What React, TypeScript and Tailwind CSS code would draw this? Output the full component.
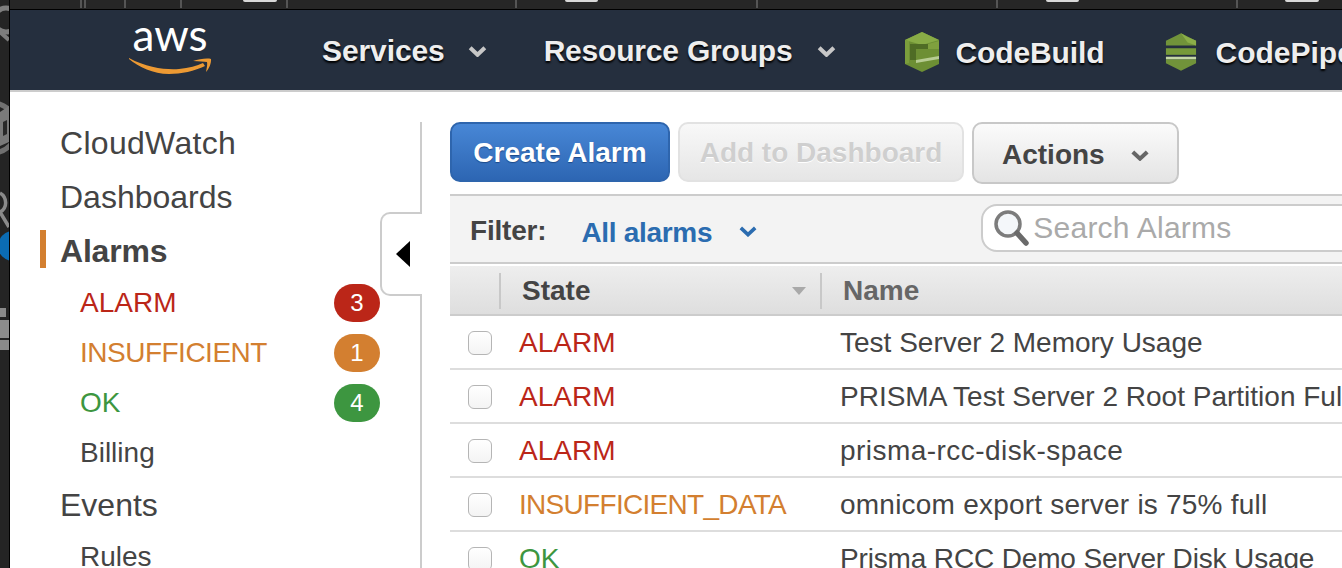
import React from "react";

const font = "font-['Liberation_Sans',Arial,sans-serif]";

function HeadChevron({ className }: { className: string }) {
  return (
    <svg viewBox="0 0 20 12" className={`${className} shrink-0`} fill="none" stroke="currentColor" strokeWidth="4.5">
      <path d="M2 2 L10 9.5 L18 2" />
    </svg>
  );
}

function CodeBuildIcon() {
  return (
    <svg viewBox="0 0 36 40" className="w-[36px] h-[40px] blur-[0.6px]">
      <polygon points="18,0 35,8 35,32 18,40 1,32 1,8" fill="#6d8f34" />
      <polygon points="18,0 35,8 18,13 1,8" fill="#88ac46" />
      <polygon points="6,12 24,12 24,17 12,17 12,28 6,28" fill="#4f6c25" />
      <polygon points="24,12 35,9 35,17 24,17" fill="#7fa03e" />
      <polygon points="12,28 35,24 35,27 12,31" fill="#b7cc92" />
      <polygon points="1,8 5,9 5,31 1,32" fill="#7b9e3c" />
    </svg>
  );
}

function CodePipelineIcon() {
  return (
    <svg viewBox="0 0 34 40" className="w-[32px] h-[40px] blur-[0.6px]">
      <polygon points="17,0 33,8 33,13 1,13 1,8" fill="#71933a" />
      <polygon points="17,0 24,4 33,8 33,13 24,10" fill="#8bae48" />
      <polygon points="1,16 33,16 33,23 1,23" fill="#76993a" />
      <polygon points="1,25 33,25 33,28 1,28" fill="#c4d6a6" />
      <polygon points="1,28 33,28 33,32 17,40 1,32" fill="#71933a" />
    </svg>
  );
}

function LeftStrip() {
  return (
    <div className="relative w-[10px] shrink-0 h-full bg-[#242424] border-r border-black overflow-hidden">
      <svg viewBox="0 0 9 568" className="absolute inset-0 w-[9px] h-[568px]">
        <circle cx="6" cy="20" r="12" fill="none" stroke="#7d7d7d" strokeWidth="5" />
        <path d="M0 32 L9 40" stroke="#7d7d7d" strokeWidth="4" />
        <circle cx="-8" cy="128" r="25" fill="none" stroke="#707070" strokeWidth="5" />
        <path d="M0 112 L9 106 V142 L0 146 Z" fill="#7a7a7a" />
        <path d="M3 122 L7 120 V134 L3 136 Z" fill="#2a2a2a" />
        <path d="M0 193 C7 197 8 208 0 212 L9 227" fill="none" stroke="#8a8a8a" strokeWidth="3.5" />
        <circle cx="13" cy="246" r="15" fill="#0b6cb4" />
        <rect x="0" y="308" width="6" height="9" fill="#8a8a8a" />
        <rect x="0" y="320" width="9" height="18" fill="#8c8c8c" />
        <rect x="0" y="340" width="9" height="10" fill="#8a8a8a" />
      </svg>
    </div>
  );
}

function Sep({ w }: { w: string }) {
  return <div className={`${w} h-[8px] border-r-2 border-[#555] shrink-0`} />;
}
function Pill({ w }: { w: string }) {
  return <div className={`${w} h-[2px] bg-[#d8d8d8] rounded-b shrink-0`} />;
}
function Gap({ w }: { w: string }) {
  return <div className={`${w} shrink-0`} />;
}

function TopStrip() {
  return (
    <div className="h-[10px] shrink-0 bg-[#262626] border-b border-black flex items-start overflow-hidden">
      <Sep w="w-[72px]" />
      <Sep w="w-[4px]" />
      <Sep w="w-[40px]" />
      <Sep w="w-[56px]" />
      <Gap w="w-[61px]" />
      <Pill w="w-[34px]" />
      <Sep w="w-[11px]" />
      <Sep w="w-[229px]" />
      <Gap w="w-[48px]" />
      <Pill w="w-[33px]" />
      <Sep w="w-[160px]" />
      <Sep w="w-[240px]" />
      <Gap w="w-[48px]" />
      <Pill w="w-[33px]" />
      <Sep w="w-[159px]" />
      <Gap w="w-[47px]" />
      <Pill w="w-[34px]" />
    </div>
  );
}

function Header() {
  const nav = "text-[30px] font-bold text-[#eeeeee] leading-none whitespace-nowrap shrink-0 [text-shadow:0_2px_2px_#000]";
  return (
    <div className="h-[82px] shrink-0 bg-[#252f3e] border-b-2 border-[#cccccc] flex items-center overflow-hidden">
      <div className="relative w-[80px] h-[60px] ml-[120px] shrink-0">
        <div className="font-['Lato',sans-serif] text-[44px] leading-none text-white text-center absolute left-0 right-0 -top-[8px]">aws</div>
        <svg viewBox="0 0 84 16" className="absolute -left-[1px] top-[38px] w-[84px] h-[16px]">
          <path d="M0 0 C18 10 38 12 50 11 C60 10 68 8 74 5 L76 8 C66 13 52 16 40 16 C24 16 10 9 0 1 Z" fill="#ed9a33" />
          <path d="M64 3 C70 1 78 0 82 1 C82.5 5 80 11 77 14 C78 9 78.5 6 78 4 C75 3.5 70 3.5 64 3 Z" fill="#ed9a33" />
        </svg>
      </div>
      <div className={`${nav} ml-[112px] mt-[2px] tracking-[-0.1px]`}>Services</div>
      <HeadChevron className="w-[19px] h-[11px] ml-[23px] mt-[2px] text-[#c7c7c7]" />
      <div className={`${nav} ml-[57px] mt-[2px] tracking-[-0.2px]`}>Resource Groups</div>
      <HeadChevron className="w-[19px] h-[11px] ml-[25px] mt-[2px] text-[#c7c7c7]" />
      <div className="ml-[68px] mt-[4px] shrink-0"><CodeBuildIcon /></div>
      <div className={`${nav} ml-[15px] mt-[6px] tracking-[-0.1px]`}>CodeBuild</div>
      <div className="ml-[61px] mt-[4px] shrink-0"><CodePipelineIcon /></div>
      <div className={`${nav} ml-[18px] mt-[6px]`}>CodePipeline</div>
    </div>
  );
}

function Badge({ n, c }: { n: number; c: string }) {
  return (
    <span className={`${c} w-[46px] h-[38px] rounded-[19px] text-white text-[24px] tracking-normal leading-none flex items-center justify-center shrink-0`}>
      {n}
    </span>
  );
}

function Sidebar() {
  const top = "h-[54px] flex items-center pl-[50px] text-[32px] leading-none text-[#444444]";
  const sub = "h-[50px] flex items-center justify-between pl-[70px] text-[28px] leading-none";
  return (
    <div className="relative w-[412px] shrink-0 pt-[24px] pr-[42px] h-full">
      <div className="absolute right-0 top-[30px] bottom-0 w-[2px] bg-[#cccccc]" />
      <div className={`${top} tracking-[0.3px]`}>CloudWatch</div>
      <div className={top}>Dashboards</div>
      <div className="h-[54px] flex items-center text-[32px] leading-none font-bold text-[#444444] pl-[30px] tracking-[-0.2px]">
        <span className="w-[6px] h-[38px] bg-[#d37f30] mr-[14px] -mt-[4px]" />Alarms
      </div>
      <div>
        <div className={`${sub} text-[#bb2618]`}>ALARM<Badge n={3} c="bg-[#bb2618]" /></div>
        <div className={`${sub} text-[#d37f30] tracking-[-0.5px]`}>INSUFFICIENT<Badge n={1} c="bg-[#d37f30]" /></div>
        <div className={`${sub} text-[#3d9640]`}>OK<Badge n={4} c="bg-[#3d9640]" /></div>
        <div className={`${sub} text-[#444444]`}>Billing</div>
      </div>
      <div className={top}>Events</div>
      <div className="h-[48px] mt-px flex items-center pl-[70px] text-[28px] leading-none text-[#444444]">Rules</div>
      <div className="absolute right-0 top-[120px] w-[42px] h-[84px] bg-white border-2 border-r-0 border-[#cccccc] rounded-l-[10px] flex items-center pl-[14px]">
        <svg viewBox="0 0 14 26" className="w-[14px] h-[26px]"><path d="M14 0 V26 L0 13 Z" fill="#000" /></svg>
      </div>
    </div>
  );
}

function Row({ state, color, name, stateCls = "", nameCls = "" }: { state: string; color: string; name: string; stateCls?: string; nameCls?: string }) {
  return (
    <div className="h-[54px] shrink-0 flex items-center border-b-2 border-[#dddddd] pt-[2px] text-[28px] leading-none whitespace-nowrap">
      <span className="w-[24px] h-[24px] ml-[18px] mr-[27px] rounded-[6px] border border-[#b5b5b5] bg-gradient-to-b from-white to-[#f4f4f4] shrink-0" />
      <span className={`${color} ${stateCls} w-[321px] shrink-0`}>{state}</span>
      <span className={`text-[#444444] ${nameCls}`}>{name}</span>
    </div>
  );
}

function Main() {
  const btn = "h-[60px] rounded-[10px] flex items-center text-[28px] font-bold leading-none whitespace-nowrap shrink-0";
  return (
    <div className="w-[920px] ml-[28px] shrink-0 pt-[30px]">
      <div className="flex items-start gap-[8px]">
        <div className={`${btn} justify-center pt-[2px] w-[220px] text-white border-2 border-[#2e65ad] bg-gradient-to-b from-[#4887d6] to-[#2d66b3] [text-shadow:0_1px_1px_#1c4a8a]`}>Create Alarm</div>
        <div className={`${btn} justify-center pt-[2px] w-[286px] text-[#cfcfcf] border-2 border-[#e2e2e2] bg-gradient-to-b from-[#f8f8f8] to-[#e6e6e6] [text-shadow:0_1px_0_#ffffff]`}>Add to Dashboard</div>
        <div className={`${btn} h-[62px] w-[207px] pl-[28px] pt-[4px] text-[#444444] border-2 border-[#c8c8c8] bg-gradient-to-b from-[#fbfbfb] to-[#e4e4e4] gap-[26px]`}>
          Actions
          <svg viewBox="0 0 20 12" className="w-[18px] h-[11px] text-[#666666] shrink-0" fill="none" stroke="currentColor" strokeWidth="4.5"><path d="M2 2 L10 9.5 L18 2" /></svg>
        </div>
      </div>
      <div className="mt-[10px] h-[70px] bg-[#f3f3f3] border-y-2 border-[#cccccc] flex items-center whitespace-nowrap">
        <span className="ml-[20px] text-[28px] font-bold text-[#444444] leading-none mt-[4px] tracking-[-0.2px] shrink-0">Filter:</span>
        <span className="ml-[35px] text-[28px] font-bold text-[#2b6cb0] leading-none mt-[8px] tracking-[-0.3px] shrink-0">All alarms</span>
        <svg viewBox="0 0 20 12" className="w-[18px] h-[11px] ml-[27px] mt-[4px] text-[#2b6cb0] shrink-0" fill="none" stroke="currentColor" strokeWidth="4"><path d="M2 2 L10 9.5 L18 2" /></svg>
        <div className="ml-[224px] w-[400px] h-[48px] bg-white border-2 border-[#cccccc] rounded-[16px] flex items-center pl-[10px] shrink-0 -mt-[2px]">
          <svg viewBox="0 0 36 38" className="w-[36px] h-[38px] shrink-0 blur-[0.4px]">
            <circle cx="15" cy="15" r="12" fill="#f4f7fa" stroke="#7c7c7c" strokeWidth="3.5" />
            <path d="M24 24 L33 34" stroke="#6a6a6a" strokeWidth="5.5" strokeLinecap="round" />
          </svg>
          <span className="ml-[4px] text-[30px] leading-none text-[#aaaaaa] tracking-[0.25px]">Search Alarms</span>
        </div>
      </div>
      <div className="mt-[2px] h-[50px] pt-[2px] flex items-center border-b-2 border-[#cccccc] bg-gradient-to-b from-[#eeeeee] to-[#dedede] text-[28px] font-bold leading-none">
        <span className="w-[51px] h-[36px] border-r-2 border-[#c8c8c8] shrink-0" />
        <span className="ml-[21px] w-[270px] text-[#444444] shrink-0">State</span>
        <svg viewBox="0 0 14 8" className="w-[14px] h-[8px] shrink-0 mr-[14px]"><path d="M0 0 H14 L7 8 Z" fill="#a9a9a9" /></svg>
        <span className="w-[2px] h-[36px] bg-[#c8c8c8] shrink-0" />
        <span className="ml-[21px] text-[#666666]">Name</span>
      </div>
      <Row state="ALARM" color="text-[#bb2618]" name="Test Server 2 Memory Usage" />
      <Row state="ALARM" color="text-[#bb2618]" name="PRISMA Test Server 2 Root Partition Full" />
      <Row state="ALARM" color="text-[#bb2618]" name="prisma-rcc-disk-space" nameCls="tracking-[0.45px]" />
      <Row state="INSUFFICIENT_DATA" color="text-[#d37f30]" stateCls="tracking-[-0.7px]" name="omnicom export server is 75% full" nameCls="tracking-[0.22px]" />
      <Row state="OK" color="text-[#3d9640]" name="Prisma RCC Demo Server Disk Usage" nameCls="tracking-[-0.15px]" />
    </div>
  );
}

export default function App() {
  return (
    <div className={`${font} w-[1342px] h-[568px] overflow-hidden bg-white flex`}>
      <LeftStrip />
      <div className="flex-1 min-w-0 flex flex-col overflow-hidden">
        <TopStrip />
        <Header />
        <div className="flex flex-1 min-h-0 overflow-hidden bg-white">
          <Sidebar />
          <Main />
        </div>
      </div>
    </div>
  );
}
